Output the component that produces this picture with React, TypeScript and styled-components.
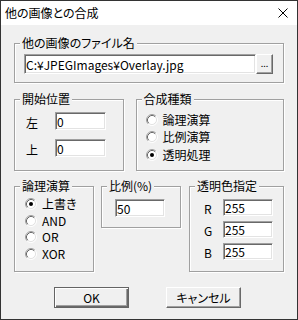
import React from 'react';
import styled, { createGlobalStyle } from 'styled-components';

const GlobalStyle = createGlobalStyle`
  html, body {
    margin: 0;
    padding: 0;
    background: #ffffff;
  }
  * {
    box-sizing: border-box;
  }
`;

const FONT = `"Noto Sans CJK JP", "Noto Sans", sans-serif`;

const Window = styled.div`
  width: 298px;
  height: 320px;
  border: 1px solid #333333;
  background: #f0f0f0;
  font-family: ${FONT};
  font-size: 12px;
  font-feature-settings: "palt";
  color: #000;
  display: flex;
  flex-direction: column;
  overflow: hidden;
`;

const TitleBar = styled.div`
  height: 24px;
  background: #ffffff;
  display: flex;
  align-items: center;
  justify-content: space-between;
  padding: 0 9px 0 4px;
`;

const Title = styled.span`
  font-size: 12px;
  line-height: 14px;
  margin-top: -1px;
`;

const Body = styled.div`
  flex: 1;
  padding: 18px 13px 0 13px;
  display: flex;
  flex-direction: column;
`;

const Row = styled.div<{ $top: number; $gap: number }>`
  display: flex;
  align-items: flex-start;
  margin-top: ${p => p.$top}px;
  gap: ${p => p.$gap}px;
`;

const Group = styled.div<{ $w: number; $h: number; $pad: string }>`
  position: relative;
  width: ${p => p.$w}px;
  height: ${p => p.$h}px;
  border: 1px solid #a0a0a0;
  box-shadow: 1px 1px 0 #ffffff, inset 1px 1px 0 #ffffff;
  padding: ${p => p.$pad};
`;

const Legend = styled.span`
  position: absolute;
  top: -8px;
  left: 5px;
  padding: 0 2px;
  background: #f0f0f0;
  line-height: 14px;
  white-space: nowrap;
`;

const TextBox = styled.input<{ $w: number; $h: number }>`
  width: ${p => p.$w}px;
  height: ${p => p.$h}px;
  margin: 0;
  padding: 0 0 0 1px;
  font-family: ${FONT};
  font-size: 12px;
  font-feature-settings: "palt";
  color: #000;
  background: #ffffff;
  border-style: solid;
  border-width: 1px;
  border-color: #a0a0a0 #ffffff #ffffff #a0a0a0;
  box-shadow: inset 1px 1px 0 #696969, inset -1px -1px 0 #e3e3e3;
  outline: none;
`;

const FileRow = styled.div`
  display: flex;
`;

const BrowseButton = styled.button`
  width: 17px;
  height: 20px;
  margin: 0;
  padding: 0;
  font-family: ${FONT};
  font-size: 9px;
  line-height: 10px;
  background: #f0f0f0;
  border-style: solid;
  border-width: 1px;
  border-color: #ffffff #696969 #696969 #ffffff;
  box-shadow: inset -1px -1px 0 #a0a0a0;
  display: flex;
  align-items: flex-end;
  justify-content: center;
  padding-bottom: 4px;
`;

const FieldList = styled.div<{ $gap: number }>`
  display: flex;
  flex-direction: column;
  gap: ${p => p.$gap}px;
`;

const Field = styled.div`
  display: flex;
  align-items: center;
`;

const FieldLabel = styled.span<{ $w: number }>`
  width: ${p => p.$w}px;
  line-height: 14px;
  margin-top: 3px;
`;

const RadioList = styled.div`
  display: flex;
  flex-direction: column;
`;

const RadioRow = styled.label<{ $h: number }>`
  display: flex;
  align-items: center;
  gap: 5px;
  height: ${p => p.$h}px;
  line-height: 14px;
`;

const ButtonRow = styled.div`
  display: flex;
  gap: 37px;
  margin-top: 15px;
  padding-left: 40px;
`;

const DialogButton = styled.button<{ $default?: boolean }>`
  width: 75px;
  height: 21px;
  margin: 0;
  padding: 0;
  font-family: ${FONT};
  font-size: 12px;
  font-feature-settings: "palt";
  color: #000;
  background: #f0f0f0;
  border-style: solid;
  border-width: 1px;
  border-color: ${p => (p.$default ? '#646464' : '#ffffff #696969 #696969 #ffffff')};
  box-shadow: ${p =>
    p.$default
      ? 'inset 1px 1px 0 #ffffff, inset -1px -1px 0 #696969, inset -2px -2px 0 #a0a0a0'
      : 'inset -1px -1px 0 #a0a0a0'};
`;

const CloseIcon = () => (
  <svg width="10" height="10" viewBox="0 0 10 10">
    <path d="M0.5 0.5 L9.5 9.5 M9.5 0.5 L0.5 9.5" stroke="#000" strokeWidth="1" fill="none" />
  </svg>
);

const RadioIcon = ({ checked }: { checked?: boolean }) => (
  <svg width="12" height="12" viewBox="0 0 12 12">
    <circle cx="6" cy="6" r="4.5" fill="#ffffff" />
    <path d="M2.11 9.89 A5.5 5.5 0 0 1 9.89 2.11" stroke="#a0a0a0" fill="none" />
    <path d="M9.89 2.11 A5.5 5.5 0 0 1 2.11 9.89" stroke="#ffffff" fill="none" />
    <path d="M2.82 9.18 A4.5 4.5 0 0 1 9.18 2.82" stroke="#696969" fill="none" />
    <path d="M9.18 2.82 A4.5 4.5 0 0 1 2.82 9.18" stroke="#e3e3e3" fill="none" />
    {checked && <circle cx="6" cy="6" r="2" fill="#000" />}
  </svg>
);

const Radio = ({ label, checked, h }: { label: string; checked?: boolean; h: number }) => (
  <RadioRow $h={h}>
    <RadioIcon checked={checked} />
    <span>{label}</span>
  </RadioRow>
);

export default function App() {
  return (
    <>
      <GlobalStyle />
      <Window>
        <TitleBar>
          <Title>他の画像との合成</Title>
          <CloseIcon />
        </TitleBar>
        <Body>
          <Group $w={270} $h={40} $pad="10px 9px 0 9px">
            <Legend>他の画像のファイル名</Legend>
            <FileRow>
              <TextBox $w={232} $h={20} defaultValue="C:¥JPEGImages¥Overlay.jpg" />
              <BrowseButton>...</BrowseButton>
            </FileRow>
          </Group>

          <Row $top={16} $gap={12}>
            <Group $w={110} $h={72} $pad="12px 0 0 11px">
              <Legend>開始位置</Legend>
              <FieldList $gap={9}>
                <Field>
                  <FieldLabel $w={29}>左</FieldLabel>
                  <TextBox $w={51} $h={18} defaultValue="0" />
                </Field>
                <Field>
                  <FieldLabel $w={29}>上</FieldLabel>
                  <TextBox $w={51} $h={18} defaultValue="0" />
                </Field>
              </FieldList>
            </Group>
            <Group $w={149} $h={72} $pad="11px 0 0 9px">
              <Legend>合成種類</Legend>
              <RadioList>
                <Radio h={17.5} label="論理演算" />
                <Radio h={17.5} label="比例演算" />
                <Radio h={17.5} label="透明処理" checked />
              </RadioList>
            </Group>
          </Row>

          <Row $top={15} $gap={7}>
            <Group $w={80} $h={86} $pad="9px 0 0 10px">
              <Legend>論理演算</Legend>
              <RadioList>
                <Radio h={16.5} label="上書き" checked />
                <Radio h={16.5} label="AND" />
                <Radio h={16.5} label="OR" />
                <Radio h={16.5} label="XOR" />
              </RadioList>
            </Group>
            <Group $w={80} $h={42} $pad="12px 0 0 13px" style={{ marginRight: 1 }}>
              <Legend>比例(%)</Legend>
              <TextBox $w={50} $h={18} defaultValue="50" />
            </Group>
            <Group $w={95} $h={86} $pad="12px 0 0 14px">
              <Legend>透明色指定</Legend>
              <FieldList $gap={5}>
                <Field>
                  <FieldLabel $w={19}>R</FieldLabel>
                  <TextBox $w={50} $h={17} defaultValue="255" />
                </Field>
                <Field>
                  <FieldLabel $w={19}>G</FieldLabel>
                  <TextBox $w={50} $h={17} defaultValue="255" />
                </Field>
                <Field>
                  <FieldLabel $w={19}>B</FieldLabel>
                  <TextBox $w={50} $h={17} defaultValue="255" />
                </Field>
              </FieldList>
            </Group>
          </Row>

          <ButtonRow>
            <DialogButton $default>OK</DialogButton>
            <DialogButton>キャンセル</DialogButton>
          </ButtonRow>
        </Body>
      </Window>
    </>
  );
}
